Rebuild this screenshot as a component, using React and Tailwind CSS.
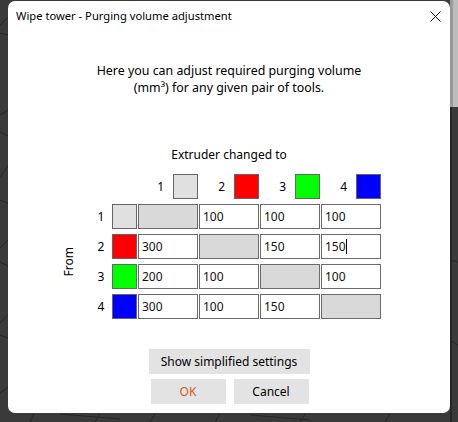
import React from "react";

const swatchColors = ["bg-[#e0e0e0]", "bg-[#ff0000]", "bg-[#00ff00]", "bg-[#0000ff]"];

const values = [
  [null, "100", "100", "100"],
  ["300", null, "150", "150"],
  ["200", "100", null, "100"],
  ["300", "100", "150", null],
];

function Cell({ value, cursor }) {
  if (value === null) {
    return <div className="w-[60px] h-[25px] border border-[#6b6b6b] bg-[#d9d9d9]" />;
  }
  return (
    <div className="w-[60px] h-[25px] border border-[#6b6b6b] bg-white flex items-center pl-[3px] text-[12px] text-[#111]">
      <span>{value}</span>
      {cursor && <span className="inline-block w-[1px] h-[15px] bg-black" />}
    </div>
  );
}

export default function App() {
  return (
    <div
      className="relative w-[458px] h-[422px] bg-[#3a3a3a] overflow-hidden"
      style={{ fontFamily: '"Noto Sans", "Open Sans", sans-serif' }}
    >
      <svg className="absolute inset-0" width="458" height="422">
        <g stroke="#262626" strokeWidth="1" fill="none">
          <line x1="0" y1="25" x2="8" y2="17" />
          <line x1="0" y1="33" x2="8" y2="35" />
          <line x1="0" y1="115" x2="8" y2="110" />
          <line x1="0" y1="132" x2="8" y2="136" />
          <line x1="0" y1="177" x2="8" y2="166" />
          <line x1="0" y1="200" x2="8" y2="203" />
          <line x1="0" y1="248" x2="8" y2="240" />
          <line x1="0" y1="262" x2="8" y2="266" />
          <line x1="0" y1="323" x2="8" y2="315" />
          <line x1="0" y1="335" x2="8" y2="338" />
          <line x1="0" y1="393" x2="8" y2="387" />
          <line x1="30" y1="422" x2="34" y2="414" />
          <line x1="60" y1="414" x2="120" y2="419" />
          <line x1="250" y1="415" x2="310" y2="420" />
          <line x1="95" y1="422" x2="100" y2="414" />
          <line x1="150" y1="422" x2="155" y2="414" />
          <line x1="215" y1="422" x2="220" y2="414" />
          <line x1="300" y1="422" x2="305" y2="414" />
          <line x1="385" y1="422" x2="390" y2="414" />
          <line x1="450" y1="260" x2="458" y2="262" />
          <line x1="450" y1="340" x2="458" y2="345" />
        </g>
        <rect x="450" y="0" width="3" height="107" fill="#9a9a9a" />
        <rect x="453" y="0" width="5" height="107" fill="#bdbdbd" />
        <rect x="450" y="107" width="2" height="315" fill="#262626" />
      </svg>

      <div className="relative ml-[8px] mt-[1px] w-[442px] h-[412px] bg-white rounded-[7px] flex flex-col">
        <div className="h-[31px] flex items-center justify-between pl-[8px] pr-[9px]">
          <span className="text-[11.2px] text-black">Wipe tower - Purging volume adjustment</span>
          <svg width="11" height="11" viewBox="0 0 11 11">
            <path d="M0.5 0.5 L10.5 10.5 M10.5 0.5 L0.5 10.5" stroke="#111" strokeWidth="1" />
          </svg>
        </div>

        <div className="mt-[30px] text-center text-[12.4px] leading-[17px] text-black">
          <div>Here you can adjust required purging volume</div>
          <div>(mm³) for any given pair of tools.</div>
        </div>

        <div className="mt-[50px] text-center text-[12px] leading-[17px] text-black">Extruder changed to</div>

        <div className="mt-[11px] flex pl-[54px]">
          <div className="w-[14px] flex flex-col">
            <div className="h-[30px]" />
            <div className="flex-1 flex items-center justify-center">
              <span className="text-[12px] text-black [writing-mode:vertical-rl] rotate-180">From</span>
            </div>
          </div>
          <div className="ml-[19px] flex flex-col gap-[5px]">
            <div className="flex h-[25px]">
              <div className="w-[43px]" />
              <div className="flex gap-[1px]">
                {swatchColors.map((c, i) => (
                  <div key={i} className="w-[60px] flex justify-end items-center gap-[9px]">
                    <span className="text-[12px] text-black">{i + 1}</span>
                    <div className={`w-[25px] h-[25px] border border-[#666] ${c}`} />
                  </div>
                ))}
              </div>
            </div>
            {values.map((row, r) => (
              <div key={r} className="flex items-center h-[25px]">
                <div className="w-[12px] text-center text-[12px] text-black">{r + 1}</div>
                <div className={`ml-[5px] w-[25px] h-[25px] border border-[#666] ${swatchColors[r]}`} />
                <div className="ml-[1px] flex gap-[1px]">
                  {row.map((v, c) => (
                    <Cell key={c} value={v} cursor={r === 1 && c === 3} />
                  ))}
                </div>
              </div>
            ))}
          </div>
        </div>

        <div className="mt-[30px] flex flex-col items-center gap-[5px] text-[12px]">
          <button className="w-[161px] h-[25px] bg-[#e3e3e3] text-black">Show simplified settings</button>
          <div className="flex gap-[8px] pl-[1px]">
            <button className="w-[75px] h-[25px] bg-[#e3e3e3] text-[#d2572a]">OK</button>
            <button className="w-[75px] h-[25px] bg-[#e3e3e3] text-black">Cancel</button>
          </div>
        </div>
      </div>
    </div>
  );
}
